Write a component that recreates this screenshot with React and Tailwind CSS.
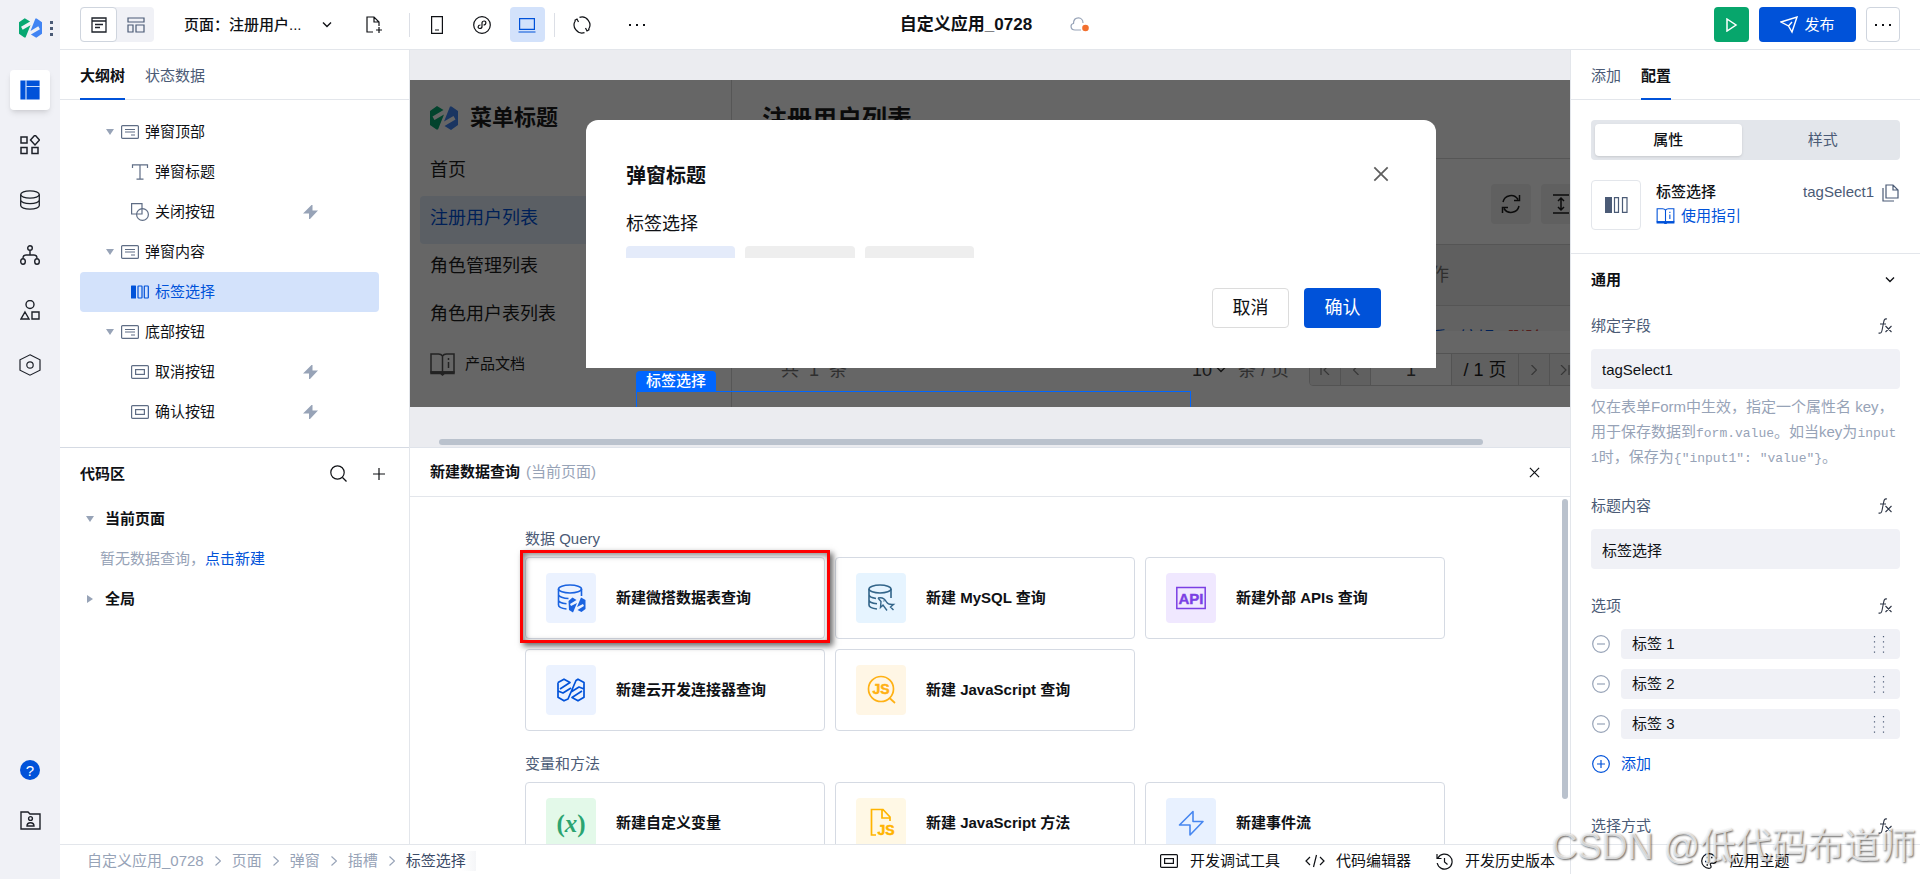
import { useState } from "react";

const TREE = [
  { id: "top", label: "弹窗顶部", icon: "slot", parent: true },
  { id: "title", label: "弹窗标题", icon: "text" },
  { id: "close", label: "关闭按钮", icon: "shape", event: true },
  { id: "body", label: "弹窗内容", icon: "slot", parent: true },
  { id: "tag", label: "标签选择", icon: "tag" },
  { id: "bottom", label: "底部按钮", icon: "slot", parent: true },
  { id: "cancel", label: "取消按钮", icon: "button", event: true },
  { id: "ok", label: "确认按钮", icon: "button", event: true },
];

const MENU = ["首页", "注册用户列表", "角色管理列表", "角色用户表列表"];

const CRUMBS = ["自定义应用_0728", "页面", "弹窗", "插槽", "标签选择"];

const QUERY_CARDS = [
  { label: "新建微搭数据表查询", icon: "weda", tone: "bg-[#ebf2ff] text-[#1a63e0]", marked: true },
  { label: "新建 MySQL 查询", icon: "mysql", tone: "bg-[#e6f4ff] text-[#33658a]" },
  { label: "新建外部 APIs 查询", icon: "api", tone: "bg-[#f0e8ff] text-[#7b3fe4]" },
  { label: "新建云开发连接器查询", icon: "connector", tone: "bg-[#ebf2ff] text-[#0052d9]" },
  { label: "新建 JavaScript 查询", icon: "jsQuery", tone: "bg-[#fff6e5] text-[#ffb114]" },
];

const METHOD_CARDS = [
  { label: "新建自定义变量", icon: "variable", tone: "bg-[#e3f9e9] text-[#2ba471]" },
  { label: "新建 JavaScript 方法", icon: "jsFile", tone: "bg-[#fff8e5] text-[#ffb400]" },
  { label: "新建事件流", icon: "flow", tone: "bg-[#e8f1ff] text-[#4787f0]" },
];

function Svg({ w = 18, h = w, box, children, className = "", sw = 1.2 }) {
  return (
    <svg
      width={w}
      height={h}
      viewBox={box ?? `0 0 ${w} ${h}`}
      fill="none"
      stroke="currentColor"
      strokeWidth={sw}
      className={`shrink-0 ${className}`}
      aria-hidden="true"
    >
      {children}
    </svg>
  );
}

function Logo({ w, h }) {
  return (
    <Svg w={w} h={h} box="0 0 28 24">
      <path d="M0 5L7 0l6.500 4L2.500 10.500 4.500 14 14 8.500 8 23.500H6.500L0 19z" fill="#07a872" stroke="none" />
      <path d="M28 19l-7 5-6.500-4 11-6.500-2-3.500-9.500 5.500L20 .5h1.500L28 5z" fill="#4184f3" stroke="none" />
    </Svg>
  );
}

const treeIcons = {
  slot: (
    <Svg h={14}>
      <rect x="0.600" y="0.600" width="16.800" height="12.800" rx="1" />
      <path d="M4 4.500h10M4 7h10M10 10h4" />
    </Svg>
  ),
  text: (
    <Svg h={16}>
      <path d="M1.500 4V.8h15V4M9 .8v14.400M5.500 15.200h7" />
    </Svg>
  ),
  shape: (
    <Svg>
      <path d="M6 11H.6V.6H11V6" />
      <circle cx="11.500" cy="11.500" r="5.900" />
      <path d="M11 5.600V11H5.600" />
    </Svg>
  ),
  tag: (
    <Svg h={14}>
      <rect x="0" y="0.500" width="5" height="13" rx="0.500" fill="currentColor" stroke="none" />
      <rect x="7" y="1" width="4" height="12" rx="0.500" />
      <rect x="13.300" y="1" width="4" height="12" rx="0.500" />
    </Svg>
  ),
  button: (
    <Svg h={14}>
      <rect x="0.600" y="0.600" width="16.800" height="12.800" rx="1" />
      <rect x="4.600" y="4.600" width="8.800" height="4.800" />
    </Svg>
  ),
};

const cardIcons = {
  weda: (
    <Svg w={30} sw={1.600}>
      <ellipse cx="14" cy="6" rx="11.500" ry="4" />
      <path d="M2.500 6v16c0 2 4 3.500 8 4M25.500 6v7M2.500 11.500c0 2 5 4 10 4M2.500 17c0 1.800 4 3.300 8 3.700" />
      <path d="M12.500 18l4-3.500 4 2.500-6.500 4 1 2 6-3-4 9.500-4-2.500z" fill="currentColor" stroke="none" />
      <path d="M29.500 26l-4 3-4-2 6.500-4-1-2-6 3 4-9.500 4.500 2.500z" fill="currentColor" stroke="none" />
    </Svg>
  ),
  mysql: (
    <Svg w={30} sw={1.600}>
      <ellipse cx="14" cy="6" rx="11" ry="4" />
      <path d="M3 6v16c0 2 4 3.500 8 4M25 6v9M3 11.500c0 2 4 3.500 7 4M3 17c0 1.800 4 3.300 8 3.700" />
      <path d="M12 15c4-1 7 1 8.500 4s3.500 2.500 7 2.500l-3 2.500 3 3M12 15l3 3.500-.5 6 2.500-2.500 4 5.500M17.500 18h.8" strokeWidth="1.400" />
    </Svg>
  ),
  api: (
    <Svg w={30} h={24} sw={1.500}>
      <rect x="0.800" y="1.500" width="28.400" height="21" />
      <text x="15" y="17.500" textAnchor="middle" fontSize="15" fontFamily="Liberation Sans" fill="currentColor" strokeWidth="0.400">API</text>
    </Svg>
  ),
  connector: (
    <Svg w={30} h={24} sw={1.700}>
      <path d="M2 4.500L8 1.200l6 3.300-10 6.500M2 4.500v14.700L8 22.800l4-1.800 8-18.500 2-1.300 6 3.300v14.700l-6 3.600-6-3.300 10-6.500M2 13l5 2 8-5M28 11l-5-2-8 5" strokeLinejoin="round" />
    </Svg>
  ),
  jsQuery: (
    <Svg w={30} sw={1.700}>
      <circle cx="15" cy="14" r="12.500" />
      <path d="M23.500 23l5.500 5" />
      <text x="15" y="19" textAnchor="middle" fontSize="14" fontFamily="Liberation Sans" fill="currentColor" strokeWidth="0.500">JS</text>
    </Svg>
  ),
  variable: (
    <span className="font-['Liberation_Serif',serif] text-[25px] leading-none font-semibold">
      (<i>x</i>)
    </span>
  ),
  jsFile: (
    <Svg w={30} sw={1.700}>
      <path d="M10 27H5.500V1.500H17L24 9v4M16 2v8h8" />
      <text x="20" y="27" textAnchor="middle" fontSize="14" fontFamily="Liberation Sans" fill="currentColor" strokeWidth="0.500">JS</text>
    </Svg>
  ),
  flow: (
    <Svg w={30} sw={1.600}>
      <path d="M17 3.500L3.500 17H14v10L27 13.500H17z" strokeLinejoin="round" />
    </Svg>
  ),
};

const Bolt = () => (
  <Svg w={15} h={14} className="text-[#97a3b7]">
    <path d="M8.500 0L0 8.500h6V14h1L15 5.500H9.500V0z" fill="currentColor" stroke="none" />
  </Svg>
);

const CaretDown = () => (
  <Svg w={8} h={6} className="text-[#97a3b7]">
    <path d="M0 0h8L4 6z" fill="currentColor" stroke="none" />
  </Svg>
);

const Chevron = ({ className }) => (
  <Svg w={10} h={6} className={className} sw={1.400}>
    <path d="M1 .5l4 4 4-4" />
  </Svg>
);

const Cross = ({ size, className }) => (
  <Svg w={size} box="0 0 12 12" className={className} sw={1.300}>
    <path d="M1 1l10 10M11 1L1 11" />
  </Svg>
);

const Dots = () => (
  <Svg w={18} h={4}>
    <path d="M1 1h2v2H1zM8 1h2v2H8zM15 1h2v2h-2z" fill="currentColor" stroke="none" />
  </Svg>
);

const Book = ({ w, h, className }) => (
  <Svg w={w} h={h} box="0 0 25 22" className={className} sw={1.500}>
    <path d="M12.500 19V3c-1-1.500-2-2-4-2H1v18h23V1h-7.500c-2 0-3 .5-4 2" />
    <path d="M1 19h23v1.500H14.500L12.500 22l-2-1.500H1z" fill="currentColor" />
    <path d="M18.500 5v2M18.500 9v6" />
  </Svg>
);

const Fx = () => (
  <button type="button" aria-label="绑定表达式" className="mr-2 text-[#2f3747]">
    <Svg w={14} h={16} sw={1.100}>
      <path d="M9 1C6.500.3 6 2 5.500 5L4 12.500C3.500 15 2.500 15.500.5 15M2 6h6M7.500 8l6 6M13.500 8l-6 6" />
    </Svg>
  </button>
);

function Rail() {
  const items = [
    <Svg key="a" w={20}>
      <path d="M1 1h18v18H1z" fill="currentColor" />
      <path d="M6 0v20M6 6.500h14" stroke="#c9dcfb" />
    </Svg>,
    <Svg key="b" w={20} sw={1.500}>
      <path d="M1 2h6v6H1zM1 12.500h6v6H1zM12 12.500h6v6h-6zM15 0l4.500 5-4.500 5-4.500-5z" />
    </Svg>,
    <Svg key="c" w={20} sw={1.300}>
      <ellipse cx="10" cy="4.500" rx="9.300" ry="3.600" />
      <path d="M.7 4.500v11c0 2 4 3.600 9.300 3.600s9.300-1.600 9.300-3.600v-11M.7 10c0 2 4 3.600 9.300 3.600s9.300-1.600 9.300-3.600" />
    </Svg>,
    <Svg key="d" w={20} sw={1.400}>
      <circle cx="10" cy="3" r="2.300" />
      <ellipse cx="3" cy="16.500" rx="2.300" ry="2.800" />
      <ellipse cx="17" cy="16.500" rx="2.300" ry="2.800" />
      <path d="M10 5.500V10M3 13.500c0-2.500 1-3.500 3-3.500h8c2 0 3 1 3 3.500" />
    </Svg>,
    <Svg key="e" w={20} sw={1.400}>
      <circle cx="10" cy="4.500" r="4" />
      <path d="M5 12l4 7H1zM12 12h7v7h-7z" />
    </Svg>,
    <Svg key="f" w={22} sw={1.200}>
      <path d="M11 .8l10 5v10.400l-10 5-10-5V5.800z" />
      <circle cx="11" cy="11" r="3.200" />
    </Svg>,
  ];
  return (
    <nav className="flex w-[60px] shrink-0 flex-col items-center bg-[#f0f1f6] pt-[18px] pb-[39px] text-[#1d2129]">
      <div className="flex w-full items-center gap-2 pl-[19px]">
        <Logo w={23} h={20} />
        <Svg w={3} h={16} className="text-[#4b5b76]">
          <path d="M0 1h3v3H0zM0 7h3v3H0zM0 13h3v3H0z" fill="currentColor" stroke="none" />
        </Svg>
      </div>
      <div className="mt-8 flex flex-1 flex-col gap-[15px]">
        {items.map((icon, i) => (
          <button
            key={i}
            type="button"
            className={`flex size-10 items-center justify-center rounded ${i === 0 ? "bg-white text-[#0052d9] shadow-md" : ""}`}
          >
            {icon}
          </button>
        ))}
      </div>
      <div className="flex flex-col gap-2.5">
        <button type="button" className="flex size-10 items-center justify-center">
          <span className="flex size-5 items-center justify-center rounded-full bg-[#0052d9] text-[15px] leading-none text-white">?</span>
        </button>
        <button type="button" className="flex size-10 items-center justify-center">
          <Svg w={21} h={19} sw={1.400}>
            <path d="M1 1h7l2 2h10v15H1z" />
            <circle cx="10.500" cy="7.500" r="1.900" />
            <path d="M7 15c0-2 1-3.300 3.500-3.300S14 13 14 15z" />
          </Svg>
        </button>
      </div>
    </nav>
  );
}

function TopBar() {
  return (
    <header className="flex h-[50px] shrink-0 items-center justify-between border-b border-[#e3e6eb] px-5">
      <div className="flex flex-1 items-center">
        <div className="flex h-[35px] rounded bg-[#f0f1f6] text-[#1d2129]">
          <button type="button" className="flex w-[37px] items-center justify-center rounded border border-[#cfd5de] bg-white">
            <Svg w={16} sw={1.300}>
              <path d="M1 1h14v14H1zM1 4h14M4 7.500h8M4 10.500h5" />
            </Svg>
          </button>
          <button type="button" className="flex w-[37px] items-center justify-center text-[#4b5b76]">
            <Svg w={18} h={16}>
              <path d="M1 1h16v4H1zM1 8h5v7H1zM9 8h8v7H9z" />
            </Svg>
          </button>
        </div>
        <button type="button" className="ml-[30px] flex items-center gap-5 font-medium">
          页面：注册用户...
          <Chevron />
        </button>
        <button type="button" className="ml-[34px]">
          <Svg w={17} h={18}>
            <path d="M7 16H1V1h7l5 5v4M8 1v5h5M13 11v6M10 14h6" />
          </Svg>
        </button>
        <div className="ml-[26px] h-6 w-px bg-[#dcdfe6]" />
        <button type="button" className="ml-[10px] flex size-[35px] items-center justify-center">
          <Svg w={12} h={18}>
            <path d="M.6 .6h10.800v16.800H.6zM4 14h4" />
          </Svg>
        </button>
        <button type="button" className="ml-[10px] flex size-[35px] items-center justify-center">
          <Svg w={18}>
            <circle cx="9" cy="9" r="8.300" />
            <path d="M7.500 9c-3 0-3 3.500-.8 3.500 1.500 0 2.300-1 2.300-2V7c0-1 .8-2 2.300-2C13.500 5 13.500 9 10.500 9" />
          </Svg>
        </button>
        <button type="button" className="ml-[10px] flex size-[35px] items-center justify-center rounded bg-[#d3e2fb] text-[#0052d9]">
          <Svg w={18} h={16}>
            <path d="M1.600 1.600h14.800v10.800H1.600zM.5 15h17" />
          </Svg>
        </button>
        <div className="ml-[9px] h-6 w-px bg-[#dcdfe6]" />
        <button type="button" className="ml-[10px] flex size-[35px] items-center justify-center">
          <Svg w={18}>
            <path d="M11.500 16.600A8 8 0 0 1 2.500 4.500M6.500 1.400A8 8 0 0 1 15.500 13.500M1.500 4.500l2.500-1.500 1.500 3M16.500 13.500L14 15l-1.500-3" />
          </Svg>
        </button>
        <button type="button" className="ml-5 flex size-[35px] items-center justify-center">
          <Dots />
        </button>
      </div>
      <div className="flex items-center gap-[38px] pl-2.5">
        <h1 className="text-[17px] font-semibold">自定义应用_0728</h1>
        <Svg w={20} h={16} className="text-[#97a3b7]">
          <path d="M11 13H5c-5 0-5-6-1.500-6.500C3.500 2 6 .8 8.500.8S13 3 13 6" />
          <circle cx="15.500" cy="11" r="3.300" fill="#f2702f" stroke="none" />
        </Svg>
      </div>
      <div className="flex flex-1 items-center justify-end gap-2.5">
        <button type="button" className="flex size-[35px] items-center justify-center rounded bg-[#07a66c] text-white">
          <Svg w={12} h={14} sw={1.500}>
            <path d="M1 1l9 6-9 6z" />
          </Svg>
        </button>
        <button type="button" className="flex h-[35px] w-[97px] items-center justify-center gap-1.5 rounded bg-[#0052d9] text-white">
          <Svg w={18} sw={1.400}>
            <path d="M1 6L17 1l-5 15-3.500-6zM8.500 10L12 6" />
          </Svg>
          发布
        </button>
        <button type="button" className="flex h-[35px] w-[34px] items-center justify-center rounded border border-[#cfd5de]">
          <Dots />
        </button>
      </div>
    </header>
  );
}

function OutlinePanel() {
  const [selected, setSelected] = useState("tag");
  return (
    <aside className="grid w-[350px] shrink-0 grid-rows-2 border-r border-[#e3e6eb]">
      <section className="flex min-h-0 flex-col">
        <div className="flex h-[50px] shrink-0 gap-5 border-b border-[#e3e6eb] px-5">
          <button type="button" className="-mb-px border-b-2 border-[#0052d9] pt-1 font-semibold">大纲树</button>
          <button type="button" className="pt-0.5 text-[#4b5b76]">状态数据</button>
        </div>
        <ul className="overflow-hidden pt-3 pr-[30px] pl-5">
          {TREE.map((node) => (
            <li key={node.id}>
              <button
                type="button"
                onClick={() => setSelected(node.id)}
                className={`flex h-10 w-full items-center rounded pr-[61px] ${node.parent ? "pl-[26px]" : "pl-[51px]"} ${
                  selected === node.id ? "bg-[#d3e2fb] text-[#0052d9]" : ""
                }`}
              >
                {node.parent && (
                  <span className="mr-[7px]">
                    <CaretDown />
                  </span>
                )}
                <span className={selected === node.id ? "" : "text-[#5f6d85]"}>{treeIcons[node.icon]}</span>
                <span className="ml-1.5 flex-1 text-left">{node.label}</span>
                {node.event && <Bolt />}
              </button>
            </li>
          ))}
        </ul>
      </section>

      <section className="min-h-0 border-t border-[#d5dae3]">
        <div className="flex h-[51px] items-center pr-6 pl-5">
          <h2 className="flex-1 font-semibold">代码区</h2>
          <button type="button" aria-label="搜索">
            <Svg w={17}>
              <circle cx="7.500" cy="7.500" r="6.700" />
              <path d="M12.500 12.500l4 4" />
            </Svg>
          </button>
          <button type="button" aria-label="新建" className="ml-[26px]">
            <Svg w={12}>
              <path d="M6 0v12M0 6h12" />
            </Svg>
          </button>
        </div>
        <div className="flex h-10 items-center gap-[11px] pl-[26px] font-semibold">
          <CaretDown />
          当前页面
        </div>
        <p className="flex h-10 items-center pl-10 text-[#97a3b7]">
          暂无数据查询，<a href="#new" className="text-[#0052d9]">点击新建</a>
        </p>
        <div className="flex h-10 items-center gap-[11px] pl-[26px] font-semibold">
          <Svg w={8} className="text-[#97a3b7]">
            <path d="M1 0v8l6-4z" fill="currentColor" stroke="none" />
          </Svg>
          全局
        </div>
      </section>
    </aside>
  );
}

function AppPreview() {
  const pageBtn = "flex items-center justify-center border-r border-[#d0d0d0] bg-[#efefef] text-[#888]";
  return (
    <div className="flex h-full bg-white text-[18px] text-[#1d1d1d]">
      <aside className="w-[322px] shrink-0 border-r border-[#d8d8d8] px-2.5">
        <div className="flex h-[68px] items-center gap-3 pt-2 pl-2.5">
          <Logo w={28} h={24} />
          <b className="text-[22px]">菜单标题</b>
        </div>
        {MENU.map((item, i) => (
          <a
            key={item}
            href="#menu"
            className={`flex h-12 items-center rounded pb-1 pl-2.5 ${i === 1 ? "bg-[#e3eefb] text-[#0052d9]" : ""}`}
          >
            {item}
          </a>
        ))}
        <a href="#docs" className="mt-2 flex items-center gap-2.5 py-1 pl-2.5 text-[15px]">
          <Book w={25} h={24} className="text-[#555]" />
          产品文档
        </a>
      </aside>
      <div className="min-w-0 flex-1 overflow-hidden">
        <h2 className="flex h-[79px] items-center border-b border-[#d8d8d8] pl-[30px] text-[25px] font-bold">注册用户列表</h2>
        <div className="w-[calc(100%+61px)] pl-[29px]">
          <div className="flex h-[85px] justify-end gap-2.5 pt-[25px]">
            <button type="button" className="flex size-10 items-center justify-center rounded bg-[#f0f0f0]">
              <Svg w={20} sw={1.500}>
                <path d="M2 8a8.200 8.200 0 0 1 15-2.500M18.500 1v5.500H13M18 12a8.200 8.200 0 0 1-15 2.500M1.500 19v-5.500H7" />
              </Svg>
            </button>
            <button type="button" className="flex size-10 items-center justify-center rounded bg-[#f0f0f0]">
              <Svg w={16} h={20} sw={1.500}>
                <path d="M0 1h16M0 19h16M8 4v12M5 7l3-3 3 3M5 13l3 3 3-3" />
              </Svg>
            </button>
            <button type="button" className="size-10 rounded bg-[#f0f0f0]" />
          </div>
          <div className="h-[87px] overflow-hidden border-l border-[#e8e8e8]">
            <table className="w-full text-left">
              <thead>
                <tr className="h-[61px] border-y border-[#d4d4d4] bg-[#eeeeee] text-[#777]">
                  <th className="font-normal">&nbsp;</th>
                  <th className="w-[233px] pl-[15px] font-normal">操作</th>
                </tr>
              </thead>
              <tbody>
                <tr className="bg-[#f6f6f6]">
                  <td />
                  <td className="pt-[21px] pb-5 pl-[13px]">
                    <span className="flex gap-3 leading-6">
                      <a href="#view" className="text-[#0052d9]">查看</a>
                      <a href="#edit" className="text-[#0052d9]">编辑</a>
                      <a href="#delete" className="text-[#d54941]">删除</a>
                    </span>
                  </td>
                </tr>
              </tbody>
            </table>
          </div>
          <div className="mt-[22px] flex h-[33px] items-center pr-[49px] pl-5 text-[#777]">
            <span className="flex-1">共&nbsp; 1 &nbsp;条</span>
            <span className="text-[#444]">10</span>
            <Chevron className="mr-3 ml-1 text-[#333]" />
            条 / 页
            <div className="ml-5 flex h-[33px] overflow-hidden rounded border border-[#d0d0d0]">
              <button type="button" className={`w-[31px] ${pageBtn}`}>
                <Svg w={10}><path d="M1 0v10M9 0L4 5l5 5" /></Svg>
              </button>
              <button type="button" className={`w-[30px] ${pageBtn}`}>
                <Svg w={6} h={10}><path d="M5.500 0l-5 5 5 5" /></Svg>
              </button>
              <input aria-label="页码" defaultValue="1" className="w-[81px] border-r border-[#d0d0d0] bg-white text-center text-[#444]" />
              <span className="flex w-[67px] items-center justify-center border-r border-[#d0d0d0] bg-[#efefef] text-[#1d1d1d]">/ 1 页</span>
              <button type="button" className={`w-[31px] ${pageBtn}`}>
                <Svg w={6} h={10}><path d="M.5 0l5 5-5 5" /></Svg>
              </button>
              <button type="button" className={`w-[31px] ${pageBtn}`}>
                <Svg w={10}><path d="M1 0l5 5-5 5M9 0v10" /></Svg>
              </button>
            </div>
          </div>
        </div>
      </div>
    </div>
  );
}

function Canvas() {
  return (
    <section className="relative min-h-0 bg-[#ebecf0] pt-[30px] pb-10">
      <div className="relative h-full overflow-hidden">
        <AppPreview />
        <div className="absolute inset-0 bg-black/60" />
        <div role="dialog" aria-label="弹窗标题" className="absolute top-10 left-44 w-[850px] rounded-t-xl bg-white px-10 pt-10 pb-10 text-[18px]">
          <div className="flex h-8 items-center justify-between">
            <h2 className="text-[20px] font-bold">弹窗标题</h2>
            <button type="button" aria-label="关闭" className="-mt-1 mr-[7px] text-[#5e5e5e]">
              <Cross size={16} />
            </button>
          </div>
          <p className="mt-5 leading-6">标签选择</p>
          <div className="mt-2.5 flex gap-2.5">
            <span className="h-3 w-[109px] rounded-t bg-[#e4ebfa]" />
            <span className="h-3 w-[110px] rounded-t bg-[#eeeeee]" />
            <span className="h-3 w-[109px] rounded-t bg-[#eeeeee]" />
          </div>
          <div className="mt-[30px] flex justify-end gap-[15px] pr-[15px]">
            <button type="button" className="h-10 w-[77px] rounded border border-[#dcdcdc]">取消</button>
            <button type="button" className="h-10 w-[77px] rounded bg-[#0052d9] text-white">确认</button>
          </div>
        </div>
        {/* selected component frame */}
        <div className="absolute top-[291px] left-[226px]">
          <span className="flex h-5 w-20 items-center justify-center rounded-t bg-[#0066ff] font-medium text-white">标签选择</span>
          <div className="h-10 w-[555px] border border-[#0066ff]" />
        </div>
      </div>
      <div className="absolute bottom-0.5 left-[29px] h-1.5 w-[90%] rounded-full bg-[#bac2cd]" />
    </section>
  );
}

function CardGrid({ title, cards }) {
  return (
    <div className="mb-[21px]">
      <h3 className="mb-1.5 leading-6 text-[#4b5b76]">{title}</h3>
      <div className="grid grid-cols-3 gap-2.5">
        {cards.map((card) => (
          <button
            key={card.label}
            type="button"
            className="relative flex items-center gap-5 rounded border border-[#d5dae3] px-5 py-[15px] text-left font-semibold"
          >
            <span className={`flex size-[50px] items-center justify-center rounded ${card.tone}`}>{cardIcons[card.icon]}</span>
            {card.label}
            {card.marked && (
              <span className="absolute -top-2 -right-1.5 -bottom-[5px] -left-1.5 z-10 border-3 border-[#ff0000] shadow-[3px_3px_6px_rgba(0,0,0,0.6),inset_2px_2px_6px_rgba(0,0,0,0.5)]" />
            )}
          </button>
        ))}
      </div>
    </div>
  );
}

function QueryPanel() {
  return (
    <section className="relative flex min-h-0 flex-col border-t border-[#dfe3ea]">
      <div className="flex h-[49px] shrink-0 items-center border-b border-[#e3e6eb] pr-[30px] pl-5">
        <h2 className="font-semibold">新建数据查询</h2>
        <span className="ml-1.5 flex-1 text-[#97a3b7]">(当前页面)</span>
        <button type="button" aria-label="关闭">
          <Cross size={11} />
        </button>
      </div>
      <div className="min-h-0 flex-1 overflow-hidden pt-[30px] pr-2.5">
        <div className="mx-auto max-w-[920px]">
          <CardGrid title="数据 Query" cards={QUERY_CARDS} />
          <CardGrid title="变量和方法" cards={METHOD_CARDS} />
        </div>
      </div>
      <div className="absolute top-[51px] right-0.5 h-[300px] w-1.5 rounded-full bg-[#bac2cd]" />
    </section>
  );
}

function FieldHead({ label, htmlFor }) {
  return (
    <div className="flex h-6 items-center justify-between text-[#4b5b76]">
      <label htmlFor={htmlFor}>{label}</label>
      <Fx />
    </div>
  );
}

function ConfigPanel() {
  const [options, setOptions] = useState(["标签 1", "标签 2", "标签 3"]);
  const inputCls = "mt-[11px] block h-10 w-full rounded bg-[#f0f1f6] px-[11px] outline-none";
  const codeCls = "font-['Liberation_Mono',monospace] text-[13px] leading-none";
  return (
    <aside className="flex w-[350px] shrink-0 flex-col overflow-hidden border-l border-[#e3e6eb]">
      <div className="flex h-[50px] shrink-0 gap-5 border-b border-[#e3e6eb] px-5">
        <button type="button" className="pt-0.5 text-[#4b5b76]">添加</button>
        <button type="button" className="-mb-px border-b-2 border-[#0052d9] pt-1 font-semibold">配置</button>
      </div>
      <div className="shrink-0 border-b border-[#e3e6eb] px-5 pt-5 pb-[23px]">
        <div className="grid h-10 grid-cols-2 gap-2 rounded bg-[#e3e6eb] p-1">
          <button type="button" className="rounded-sm bg-white font-medium shadow-sm">属性</button>
          <button type="button" className="text-[#4b5b76]">样式</button>
        </div>
        <div className="mt-5 flex h-[50px]">
          <span className="flex size-[50px] items-center justify-center rounded border border-[#e3e6eb] text-[#4b5b76]">
            <Svg w={23} h={16}>
              <path d="M0 0h7v16H0z" fill="currentColor" stroke="none" />
              <path d="M9.500 .6h4v14.800h-4zM17.500 .6h4.500v14.800h-4.500z" />
            </Svg>
          </span>
          <div className="ml-[15px] flex-1">
            <p className="leading-6 font-medium">标签选择</p>
            <a href="#guide" className="flex items-center gap-1.5 leading-6 text-[#0052d9]">
              <Book w={19} h={16} />
              使用指引
            </a>
          </div>
          <span className="leading-6 text-[#4b5b76]">tagSelect1</span>
          <button type="button" aria-label="复制" className="mt-1 ml-2 h-[18px] text-[#4b5b76]">
            <Svg w={18}>
              <path d="M4 1h7l5 5v8H4zM11 1v5h5M1 4v13h11" />
            </Svg>
          </button>
        </div>
      </div>
      <div className="min-h-0 flex-1 overflow-hidden px-5">
        <div className="flex h-[51px] items-center justify-between pr-[5px]">
          <h3 className="font-semibold">通用</h3>
          <Chevron />
        </div>
        <div className="mt-[9px]">
          <FieldHead label="绑定字段" htmlFor="field" />
          <input id="field" defaultValue="tagSelect1" className={inputCls} />
          <p className="mt-[5px] leading-[25px] break-all text-[#97a3b7]">
            仅在表单Form中生效，指定一个属性名 key，用于保存数据到
            <code className={codeCls}>form.value</code>。如当key为
            <code className={codeCls}>input1</code>时，保存为
            <code className={codeCls}>{'{"input1": "value"}'}</code>。
          </p>
        </div>
        <div className="mt-[25px]">
          <FieldHead label="标题内容" htmlFor="title" />
          <input id="title" defaultValue="标签选择" className={inputCls} />
        </div>
        <div className="mt-[25px]">
          <FieldHead label="选项" />
          <div className="mt-[11px] space-y-2.5">
            {options.map((opt, i) => (
              <div key={opt} className="flex h-[30px] items-center">
                <button
                  type="button"
                  aria-label="删除选项"
                  className="ml-px text-[#97a3b7]"
                  onClick={() => setOptions(options.filter((o) => o !== opt))}
                >
                  <Svg>
                    <circle cx="9" cy="9" r="8.300" />
                    <path d="M5 9h8" />
                  </Svg>
                </button>
                <div className="ml-[11px] flex h-full min-w-0 flex-1 items-center rounded bg-[#f0f1f6] pr-[15px] pl-[11px]">
                  <input aria-label={`选项 ${i + 1}`} defaultValue={opt} className="min-w-0 flex-1 bg-transparent outline-none" />
                  <Svg w={12} h={17} className="text-[#4b5b76]">
                    <path d="M1.500 0v17M10.500 0v17" strokeDasharray="1.200 4" strokeWidth="1.200" />
                  </Svg>
                </div>
              </div>
            ))}
            <button type="button" className="ml-px flex h-[30px] items-center gap-[11px] text-[#0052d9]">
              <Svg>
                <circle cx="9" cy="9" r="8.300" />
                <path d="M5 9h8M9 5v8" />
              </Svg>
              添加
            </button>
          </div>
        </div>
        <div className="mt-[35px]">
          <FieldHead label="选择方式" />
        </div>
      </div>
    </aside>
  );
}

function StatusBar() {
  return (
    <footer className="flex h-[35px] shrink-0 border-t border-[#e3e6eb]">
      <div className="mb-[5px] flex flex-1 items-center justify-between border-r border-[#e3e6eb] pt-[3px] pr-[15px] pl-[27px]">
        <ol className="flex items-center text-[#97a3b7]">
          {CRUMBS.map((crumb, i) => (
            <li key={crumb} className="flex items-center">
              {i > 0 && (
                <Svg w={6} h={10} className="mx-[11px]">
                  <path d="M.5 .5l5 4.500-5 4.500" />
                </Svg>
              )}
              <span className={i === CRUMBS.length - 1 ? "bg-linear-to-l from-[#f5f6f8] to-white to-20% pr-2.5 text-[#3b4a66]" : ""}>{crumb}</span>
            </li>
          ))}
        </ol>
        <div className="flex items-center gap-[25px]">
          <button type="button" className="flex items-center gap-3">
            {treeIcons.button}
            开发调试工具
          </button>
          <button type="button" className="flex items-center gap-[11px]">
            <Svg w={20} h={14}>
              <path d="M5 3L1 7l4 4M15 3l4 4-4 4M11.500 1l-3 12" />
            </Svg>
            代码编辑器
          </button>
          <button type="button" className="flex items-center gap-3">
            <Svg w={17}>
              <path d="M2 5a7.500 7.500 0 1 1-.8 5M1 1v4.500h4.500M8.500 5v4l3 2.500" />
            </Svg>
            开发历史版本
          </button>
        </div>
      </div>
      <div className="mb-[5px] flex w-[349px] items-center justify-center pt-[3px]">
        <button type="button" className="flex items-center gap-3">
          <Svg w={16}>
            <path d="M8 15.300C4 15.300.7 12 .7 8S4 .7 8 .7 15.300 4 15.300 7.500c0 2.500-2 3-4 2.700-2-.3-2.500 1-1.500 2.500.7 1.300.2 2.600-1.800 2.600z" />
            <path d="M4 8.500h1.500M5.500 4.500H7M10 4.500h1.500M5.500 12H7" strokeWidth="1.600" />
          </Svg>
          应用主题
        </button>
      </div>
    </footer>
  );
}

export default function App() {
  return (
    <div className="relative flex h-screen overflow-hidden bg-white font-['Liberation_Sans','Noto_Sans_CJK_SC',sans-serif] text-[15px] leading-5 text-[#0f1115]">
      <Rail />
      <div className="flex min-w-0 flex-1 flex-col">
        <TopBar />
        <div className="flex min-h-0 flex-1">
          <OutlinePanel />
          <main className="grid min-w-0 flex-1 grid-cols-1 grid-rows-2">
            <Canvas />
            <QueryPanel />
          </main>
          <ConfigPanel />
        </div>
        <StatusBar />
      </div>
      <div className="pointer-events-none absolute right-1 bottom-3 text-[36px] leading-10 text-white/70 [text-shadow:1px_1px_2px_rgba(0,0,0,0.6)]">
        CSDN @低代码布道师
      </div>
    </div>
  );
}
